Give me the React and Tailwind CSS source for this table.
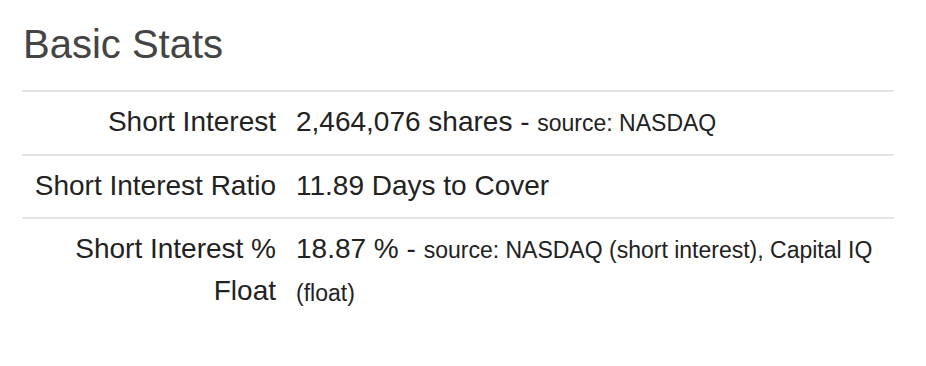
import React from 'react';

const rows = [
    { label: 'Short Interest', value: '2,464,076 shares', source: 'source: NASDAQ' },
    { label: 'Short Interest Ratio', value: '11.89 Days to Cover' },
    { label: 'Short Interest % Float', value: '18.87 %', source: 'source: NASDAQ (short interest), Capital IQ (float)' },
];

const App = () => {
    return (
        <div className="w-[926px] h-[366px] bg-white font-['Liberation_Sans',Arial,sans-serif] text-[#222]">
            <div className="pl-[22px] pr-[32px] pt-[22px]">
                <h3 className="text-[40px] leading-[44px] text-[#444] pl-px">Basic Stats</h3>
                <div className="mt-[24px]">
                    {rows.map((row) => (
                        <div key={row.label} className="flex border-t-2 border-[#e4e4e4]">
                            <div className="w-[264px] shrink-0 px-[10px] pt-[9px] pb-[10px] text-right text-[28px] leading-[42px]">
                                {row.label}
                            </div>
                            <div className="flex-1 px-[10px] pt-[9px] pb-[10px] text-[28px] leading-[42px]">
                                {row.value}
                                {row.source && (
                                    <>
                                        {' - '}
                                        <span className="text-[23px]">{row.source}</span>
                                    </>
                                )}
                            </div>
                        </div>
                    ))}
                </div>
            </div>
        </div>
    );
};

export default App;
